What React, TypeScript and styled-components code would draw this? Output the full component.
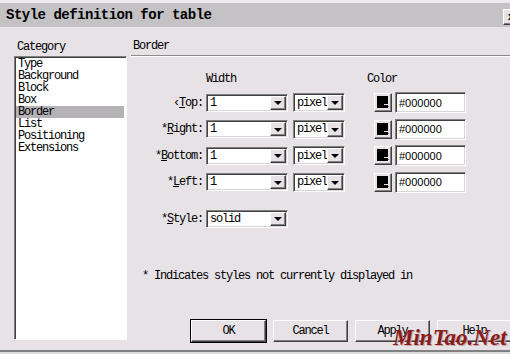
import React from 'react';
import styled, { createGlobalStyle, css } from 'styled-components';

const GlobalStyle = createGlobalStyle`
  html, body {
    margin: 0;
    padding: 0;
    background: #e6e2e6;
    overflow: hidden;
  }
  body {
    font-family: "Liberation Mono", "Courier New", monospace;
    font-size: 12px;
    letter-spacing: -1.2px;
    color: #000;
  }
`;

const sunken = css`
  box-sizing: border-box;
  border-top: 1px solid #808080;
  border-left: 1px solid #808080;
  border-bottom: 1px solid #fff;
  border-right: 1px solid #fff;
  box-shadow: inset 1px 1px 0 #404040, inset -1px -1px 0 #d8d4d8;
  background: #fff;
`;

const raised = css`
  box-sizing: border-box;
  border-top: 1px solid #fff;
  border-left: 1px solid #fff;
  border-bottom: 1px solid #404040;
  border-right: 1px solid #404040;
  box-shadow: inset -1px -1px 0 #808080;
  background: #e6e2e6;
`;

const Window = styled.div`
  position: relative;
  width: 510px;
  height: 354px;
  box-sizing: border-box;
  display: flex;
  flex-direction: column;
  overflow: hidden;
  background: #e6e2e6;
  border-top: 3px solid #eeeaee;
  border-bottom: 2px solid #dedade;
`;

const TitleBar = styled.div`
  height: 24px;
  flex-shrink: 0;
  display: flex;
  align-items: center;
  padding-left: 6px;
  background: #c4c2c4;
`;

const Title = styled.span`
  font-weight: bold;
  font-size: 14px;
  letter-spacing: -0.5px;
`;

const CloseButton = styled.div`
  ${raised};
  width: 16px;
  height: 16px;
  margin-left: auto;
  margin-right: -9px;
  align-self: flex-end;
  margin-bottom: 2px;
  display: flex;
  align-items: center;
  justify-content: center;
  font-size: 11px;
  font-weight: bold;
  letter-spacing: 0;
`;

const Body = styled.div`
  flex: 1;
  display: flex;
  min-height: 0;
  border-bottom: 2px solid #808080;
`;

const Sidebar = styled.div`
  width: 113px;
  flex-shrink: 0;
  padding: 14px 0 0 14px;
  display: flex;
  flex-direction: column;
`;

const PaneLabel = styled.div`
  line-height: 12px;
  padding-left: 3px;
`;

const ListBox = styled.div`
  ${sunken};
  border-width: 1px;
  margin-top: 3px;
  height: 284px;
  padding: 1px 1px;
  box-shadow: inset 1px 1px 0 #404040;
`;

const ListItem = styled.div<{ $selected?: boolean }>`
  line-height: 12px;
  padding-left: 2px;
  margin-right: 1px;
  background: ${(p) => (p.$selected ? '#b4b2b4' : 'transparent')};
`;

const Main = styled.div`
  flex: 1;
  padding-left: 4px;
  display: flex;
  flex-direction: column;
  min-width: 0;
`;

const SectionHeader = styled.div`
  margin-top: 13px;
  padding: 0 0 3px 2px;
  line-height: 12px;
  border-bottom: 1px solid #8c8a8c;
  box-shadow: 0 1px 0 #fff;
`;

const Grid = styled.div`
  margin-top: 17px;
  display: grid;
  grid-template-columns: 75px 87px 81px 21px 71px;
  grid-template-rows: 13.5px repeat(4, 21px);
  row-gap: 5.5px;
  align-items: center;
`;

const ColumnHead = styled.div<{ $shift?: number }>`
  align-self: start;
  line-height: 12px;
  margin-left: ${(p) => p.$shift ?? 0}px;
  white-space: nowrap;
`;

const FieldLabel = styled.label`
  text-align: right;
  padding-right: 3px;
  white-space: nowrap;
  line-height: 12px;
  u {
    text-decoration: underline;
    text-underline-offset: 1px;
  }
`;

const Select = styled.div<{ $w: number; $h: number }>`
  ${sunken};
  width: ${(p) => p.$w}px;
  height: ${(p) => p.$h}px;
  display: flex;
  align-items: center;
  padding: 1px;
`;

const SelectValue = styled.span`
  flex: 1;
  padding-left: 2px;
  line-height: 12px;
`;

const DropButton = styled.div`
  ${raised};
  width: 16px;
  align-self: stretch;
  display: flex;
  align-items: center;
  justify-content: center;

  &::after {
    content: '';
    border-left: 4px solid transparent;
    border-right: 4px solid transparent;
    border-top: 4px solid #000;
    margin-top: 1px;
  }
`;

const Swatch = styled.div`
  ${raised};
  width: 18px;
  height: 19px;
  display: flex;
  align-items: center;
  justify-content: center;
  padding-bottom: 1px;
`;

const ColorInput = styled.div`
  ${sunken};
  width: 71px;
  height: 21px;
  display: flex;
  align-items: center;
  padding-left: 3px;
  font-family: "Liberation Sans", Arial, sans-serif;
  font-size: 11px;
  letter-spacing: 0;
`;

const StyleRow = styled.div`
  margin-top: 15.5px;
  height: 21px;
  display: flex;
  align-items: center;

  ${FieldLabel} {
    width: 75px;
    box-sizing: border-box;
  }
`;

const Footnote = styled.div`
  margin-top: 41px;
  padding-left: 11px;
  line-height: 12px;
  white-space: nowrap;
`;

const ButtonRow = styled.div`
  margin-top: 38px;
  padding-left: 60px;
  display: flex;
  gap: 7px;
`;

const Button = styled.div<{ $default?: boolean }>`
  ${raised};
  flex-shrink: 0;
  width: 75px;
  height: 22px;
  display: flex;
  align-items: center;
  justify-content: center;
  ${(p) =>
    p.$default &&
    css`
      outline: 1px solid #000;
      outline-offset: 0;
      border-color: #fff #404040 #404040 #fff;
    `}
`;

const Watermark = styled.div`
  position: absolute;
  left: 393px;
  top: 323px;
  font-family: "Liberation Serif", "Times New Roman", serif;
  font-style: italic;
  font-weight: bold;
  font-size: 23px;
  line-height: 1;
  letter-spacing: 0;
  color: #8c1c1c;
  text-shadow: 1px 1px 0 #c4a8a8;
  white-space: nowrap;
  pointer-events: none;
`;

const SwatchIcon = () => (
  <svg width="14" height="14" viewBox="0 0 14 14">
    <path d="M1 1h11v12H8v-3H12V1z" fill="#000" />
    <path d="M1 1h11v8H8v4H1z" fill="#000" />
    <path d="M9 11h4l-2 2z" fill="#000" />
  </svg>
);

const categories = ['Type', 'Background', 'Block', 'Box', 'Border', 'List', 'Positioning', 'Extensions'];

const sides = [
  { pre: '\u2039', key: 'T', rest: 'op:' },
  { pre: '*', key: 'R', rest: 'ight:' },
  { pre: '*', key: 'B', rest: 'ottom:' },
  { pre: '*', key: 'L', rest: 'eft:' },
];

const App: React.FC = () => {
  return (
    <>
      <GlobalStyle />
      <Window>
        <TitleBar>
          <Title>Style definition for table</Title>
          <CloseButton>x</CloseButton>
        </TitleBar>
        <Body>
          <Sidebar>
            <PaneLabel>Category</PaneLabel>
            <ListBox>
              {categories.map((c) => (
                <ListItem key={c} $selected={c === 'Border'}>
                  {c}
                </ListItem>
              ))}
            </ListBox>
          </Sidebar>
          <Main>
            <SectionHeader>Border</SectionHeader>
            <Grid>
              <span />
              <ColumnHead>Width</ColumnHead>
              <span />
              <ColumnHead $shift={-7} style={{ gridColumn: '4 / 6' }}>
                Color
              </ColumnHead>
              {sides.map((s) => (
                <React.Fragment key={s.key}>
                  <FieldLabel>
                    {s.pre}
                    <u>{s.key}</u>
                    {s.rest}
                  </FieldLabel>
                  <Select $w={82} $h={18}>
                    <SelectValue>1</SelectValue>
                    <DropButton />
                  </Select>
                  <Select $w={52} $h={19}>
                    <SelectValue>pixel</SelectValue>
                    <DropButton />
                  </Select>
                  <Swatch>
                    <SwatchIcon />
                  </Swatch>
                  <ColorInput>#000000</ColorInput>
                </React.Fragment>
              ))}
            </Grid>
            <StyleRow>
              <FieldLabel>
                *<u>S</u>tyle:
              </FieldLabel>
              <Select $w={82} $h={18}>
                <SelectValue>solid</SelectValue>
                <DropButton />
              </Select>
            </StyleRow>
            <Footnote>* Indicates styles not currently displayed in</Footnote>
            <ButtonRow>
              <Button $default>OK</Button>
              <Button>Cancel</Button>
              <Button>Apply</Button>
              <Button>Help</Button>
            </ButtonRow>
          </Main>
        </Body>
        <Watermark>MinTao.Net</Watermark>
      </Window>
    </>
  );
};

export default App;
